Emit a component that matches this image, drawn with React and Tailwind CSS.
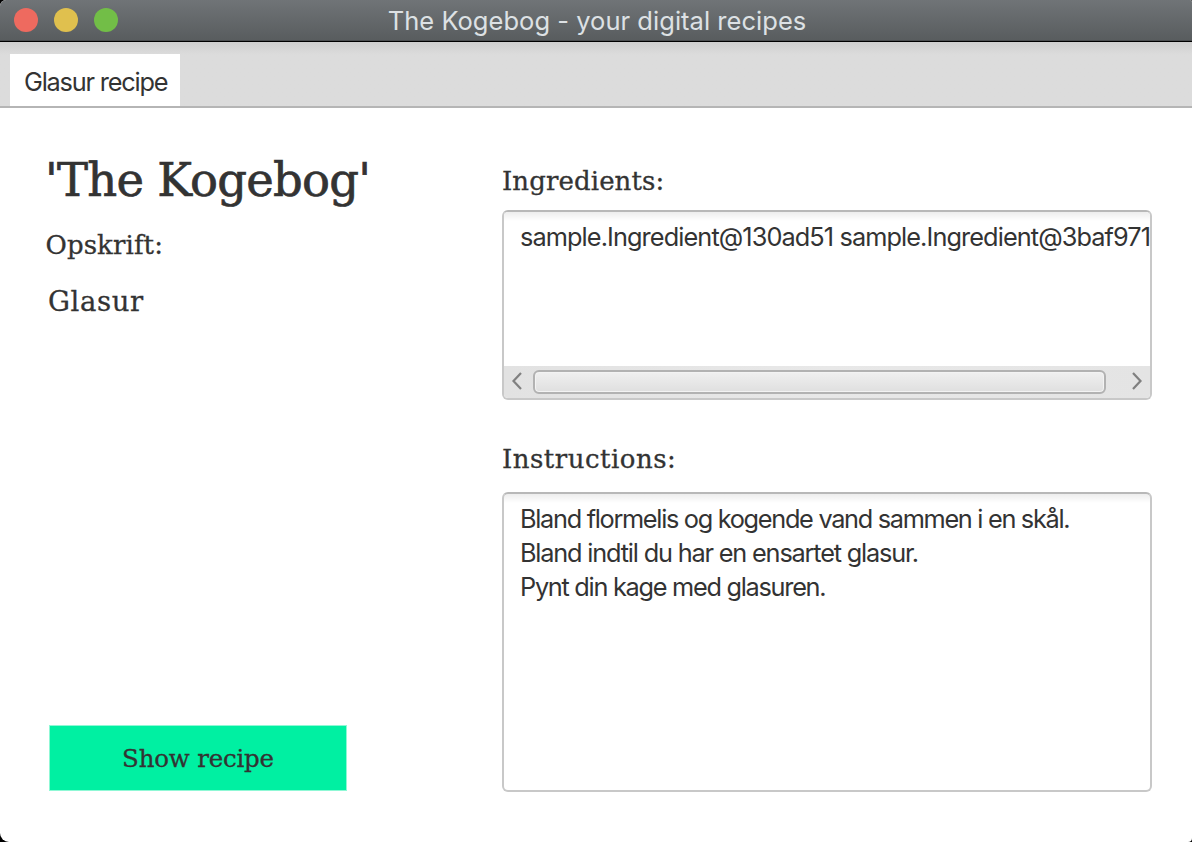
const slab = "font-['DejaVu_Serif',serif] whitespace-nowrap";
const sans = "font-['Inter',sans-serif] whitespace-nowrap";

function TitleBar() {
  return (
    <header className="relative flex h-[42px] shrink-0 items-center border-b border-black bg-linear-to-b from-[#707477] to-[#585c5e] pl-3.5 shadow-[inset_0_-1px_0_#4b4e50]">
      <div className="flex gap-4 pb-px">
        <span className="size-6 rounded-full bg-[#ee6a5f]" />
        <span className="size-6 rounded-full bg-[#e0c04e]" />
        <span className="size-6 rounded-full bg-[#72be47]" />
      </div>
      <h1 className={`${sans} absolute inset-x-0 top-0 pl-[2px] text-center text-[25.5px] leading-[42px] tracking-[0.03px] text-[#dde1e4]`}>
        The Kogebog - your digital recipes
      </h1>
    </header>
  );
}

function Arrow({ d }) {
  return (
    <svg className="mb-0.5 shrink-0" width="12" height="18" viewBox="0 0 12 18" fill="none" stroke="#808080" strokeWidth="2.2">
      <path d={d} />
    </svg>
  );
}

export default function App() {
  return (
    <div className="h-[842px] w-[1192px] overflow-hidden bg-black">
      <div className="flex h-full flex-col overflow-hidden rounded-tl-[6px] rounded-tr-[2px] rounded-br-[4px] rounded-bl-[9px] bg-white text-[#333333]">
        <TitleBar />
        <nav className="flex h-[66px] shrink-0 items-end border-b-2 border-[#b5b5b5] bg-linear-to-b from-[#cfcfcf] to-[#dcdcdc] to-20% pl-2.5">
          <div className={`${sans} h-[52px] w-[170px] bg-white pl-[14px] text-[25.3px] leading-[56px] tracking-[-1.2px]`}>
            Glasur recipe
          </div>
        </nav>
        <main className="flex min-h-0 flex-1">
          <section className="flex w-[502px] flex-col items-start">
            <h2 className={`${slab} mt-10 ml-[45px] h-16 text-[46.5px] leading-[64px] tracking-[-0.75px] [-webkit-text-stroke:0.7px_#333333]`}>'The Kogebog'</h2>
            <p className={`${slab} mt-[13px] ml-[45.5px] h-10 text-[26px] leading-[40px] tracking-[0.1px] [-webkit-text-stroke:0.3px_#333333]`}>Opskrift:</p>
            <p className={`${slab} mt-4 ml-[48px] h-10 text-[27.5px] leading-[40px] tracking-[0.6px] [-webkit-text-stroke:0.3px_#333333]`}>Glasur</p>
            <button className={`${slab} mt-auto mb-[52px] ml-[50px] h-16 w-[296px] bg-[#00f0a2] pt-0.5 text-[24.5px] leading-[62px] tracking-[-0.2px] shadow-[0_0_0_1px_#8ff8d5] [-webkit-text-stroke:0.3px_#333333]`}>
              Show recipe
            </button>
          </section>
          <section className="flex w-[650px] flex-col">
            <h3 className={`${slab} mt-[53px] h-10 text-[26px] leading-[40px] tracking-[0.1px] [-webkit-text-stroke:0.3px_#333333]`}>Ingredients:</h3>
            <div className="mt-[9px] flex h-[190px] flex-col overflow-hidden rounded-[6px] border-2 border-[#c8c8c8] border-t-[#b8b8b8] bg-white">
              <div className={`${sans} flex-1 overflow-hidden bg-linear-to-b from-[#ededed] to-white to-[9px] pt-2 pl-4 text-[25.3px] leading-[34px] tracking-[-0.9px]`}>
                sample.Ingredient@130ad51 sample.Ingredient@3baf971
              </div>
              <div className="flex h-8 shrink-0 items-center bg-linear-to-r from-[#e2e2e2] via-[#e8e8e8] to-[#e4e4e4] pr-[7px] pl-[7px]">
                <Arrow d="M10 1 L2.5 9 L10 17" />
                <div className="ml-2.5 h-6 w-[573px] shrink-0 rounded-[6px] border-2 border-[#b2b2b2] bg-linear-to-b from-[#f0f0f0] to-[#dfdfdf] shadow-[inset_0_0_0_1px_#f3f3f3]" />
                <div className="ml-auto">
                  <Arrow d="M2 1 L9.5 9 L2 17" />
                </div>
              </div>
            </div>
            <h3 className={`${slab} mt-[39px] h-10 text-[26px] leading-[40px] tracking-[0.5px] [-webkit-text-stroke:0.3px_#333333]`}>Instructions:</h3>
            <div className="mt-[13px] h-[300px] overflow-hidden rounded-[6px] border-2 border-[#c8c8c8] border-t-[#b8b8b8] bg-linear-to-b from-[#ededed] to-white to-[9px]">
              <div className={`${sans} pt-2 pl-4 text-[25.3px] leading-[34px]`}>
                <p className="tracking-[-1.3px]">Bland flormelis og kogende vand sammen i en skål.</p>
                <p className="tracking-[-1.18px]">Bland indtil du har en ensartet glasur.</p>
                <p className="tracking-[-1.27px]">Pynt din kage med glasuren.</p>
              </div>
            </div>
          </section>
        </main>
      </div>
    </div>
  );
}
